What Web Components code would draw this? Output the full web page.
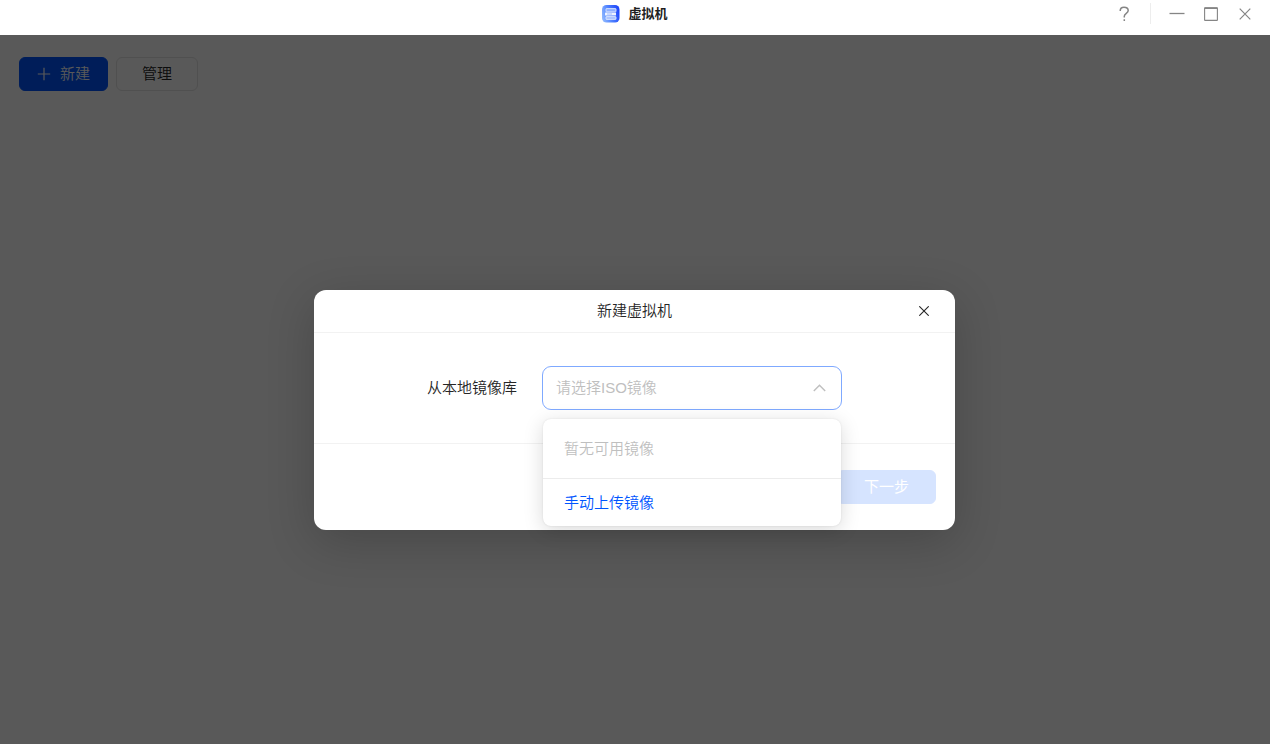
<!DOCTYPE html>
<html lang="zh-CN">
<head>
<meta charset="utf-8">
<title>虚拟机</title>
<style>
  html, body { height: 100%; margin: 0; }
  body {
    font-family: "Liberation Sans", "Noto Sans CJK SC", sans-serif;
    font-size: 15px;
    font-weight: 350;
    line-height: 22px;
    color: #262626;
    background: #fff;
  }
</style>
</head>
<body>
<vm-window>
  <vm-titlebar slot="title">虚拟机</vm-titlebar>
  <vm-toolbar slot="content"></vm-toolbar>
  <vm-dialog slot="overlay">
    <span slot="title">新建虚拟机</span>
    <vm-image-select></vm-image-select>
    <vm-button slot="actions" variant="primary" disabled>下一步</vm-button>
  </vm-dialog>
</vm-window>

<script>
  const define = (name, html, setup) => {
    const template = document.createElement('template');
    template.innerHTML = html;
    customElements.define(name, class extends HTMLElement {
      constructor() {
        super();
        this.attachShadow({ mode: 'open' }).append(template.content.cloneNode(true));
      }
      connectedCallback() {
        if (setup) setup(this, this.shadowRoot);
      }
    });
  };

  define('vm-button', `
    <style>
      :host { display: inline-flex; }
      button {
        display: flex; align-items: center; justify-content: center; gap: 9px;
        height: 34px; padding: 0 25px; box-sizing: border-box;
        border: 1px solid #e4e4e4; border-radius: 6px;
        background: #fff; color: #262626; font: inherit; cursor: pointer;
      }
      :host([variant="primary"]) button { border-color: #0055ff; background: #0055ff; color: #fff; }
      :host([icon]) button { padding: 0 17px; }
      :host([disabled]) button {
        padding: 0 26px; border-color: #d6e4ff; background: #d6e4ff; color: #fff;
        font-weight: 400; cursor: default;
      }
    </style>
    <button type="button"><slot name="icon"></slot><slot></slot></button>
  `, (host, root) => {
    root.querySelector('button').disabled = host.hasAttribute('disabled');
  });

  define('vm-titlebar', `
    <style>
      :host {
        display: grid; grid-template-columns: 1fr auto 1fr; align-items: center;
        height: 27px; padding-bottom: 8px; background: #fff;
      }
      h1 {
        grid-column: 2; display: flex; align-items: center; gap: 8px;
        margin: 0; font-size: 13px; line-height: 18px; font-weight: 700; color: #1f1f1f;
      }
      nav { display: flex; align-items: center; justify-content: flex-end; padding-right: 8px; }
      button {
        display: grid; place-items: center; width: 34px; height: 27px; padding: 0;
        border: 0; background: none; color: #858585; cursor: pointer;
      }
      .rule { width: 1px; height: 21px; margin: 0 9px; background: #ededed; }
      svg { display: block; fill: none; stroke: currentColor; }
    </style>
    <h1>
      <svg width="18" height="18" viewBox="0 0 18 18" stroke="none" aria-hidden="true">
        <defs><linearGradient id="g" x1="0" y1="0.6" x2="1" y2="0.3">
          <stop offset="0" stop-color="#8bb5ff"/><stop offset="0.45" stop-color="#4d80ff"/><stop offset="1" stop-color="#1c43fa"/>
        </linearGradient></defs>
        <rect width="17.5" height="17.5" rx="4.5" fill="url(#g)" stroke="none"/>
        <rect x="4" y="3.6" width="10" height="3.2" rx=".5" fill="#8fb0ff" stroke="#e8f0ff" stroke-width=".8"/>
        <rect x="3" y="7.4" width="11" height="3.2" rx=".5" fill="#eef4ff" stroke="none"/>
        <path d="M5 9h5" stroke="#8fb0ff" stroke-width=".8"/>
        <rect x="4" y="11.6" width="10" height="2.8" rx=".5" fill="#a9c3ff" stroke="#e8f0ff" stroke-width=".8"/>
      </svg>
      <slot></slot>
    </h1>
    <nav aria-label="窗口">
      <button type="button" aria-label="帮助">
        <svg width="12" height="16" viewBox="0 0 12 16" stroke-width="1.5">
          <path d="M2.2 4.9C2.2 2.5 3.7 1.2 6 1.2S10.2 2.6 10.2 4.6C10.2 7.3 6.3 7.3 6.3 10.2V11.4M6.3 13.2V15"/>
        </svg>
      </button>
      <span class="rule"></span>
      <button type="button" aria-label="最小化">
        <svg width="16" height="16" viewBox="0 0 16 16" stroke-width="1.3"><path d="M.5 7.5H15.5"/></svg>
      </button>
      <button type="button" aria-label="最大化">
        <svg width="14" height="14" viewBox="0 0 14 14"><rect x=".6" y=".8" width="12.8" height="12.6" rx=".5" stroke-width="1.1"/><path d="M.6 1.2H13.4" stroke-width="1.6"/></svg>
      </button>
      <button type="button" aria-label="关闭">
        <svg width="12" height="12" viewBox="0 0 12 12" stroke-width="1.2"><path d="M.7 .7L11.3 11.3M11.3 .7L.7 11.3"/></svg>
      </button>
    </nav>
  `);

  define('vm-toolbar', `
    <style>
      :host { display: flex; gap: 8px; padding: 22px 19px; }
      svg { display: block; }
    </style>
    <vm-button variant="primary" icon>
      <svg slot="icon" width="14" height="14" viewBox="0 0 14 14" fill="none" stroke="#fff" stroke-width="1.2" aria-hidden="true"><path d="M7 .8V13.2M.8 7H13.2"/></svg>新建
    </vm-button>
    <vm-button>管理</vm-button>
  `);

  define('vm-window', `
    <style>
      :host { display: flex; flex-direction: column; min-height: 100vh; }
      main { flex: 1; display: grid; }
      .content, .scrim { grid-area: 1 / 1; }
      .scrim {
        z-index: 1; display: flex; align-items: center; justify-content: center;
        padding: 41px 1px 0 0; background: rgba(0, 0, 0, .65);
      }
    </style>
    <slot name="title"></slot>
    <main>
      <div class="content"><slot name="content"></slot></div>
      <div class="scrim"><slot name="overlay"></slot></div>
    </main>
  `);

  define('vm-dialog', `
    <style>
      :host { display: block; width: 641px; max-width: 100%; }
      section { border-radius: 12px; background: #fff; box-shadow: 0 12px 48px rgba(0, 0, 0, .2); }
      header {
        display: grid; grid-template-columns: 1fr auto 1fr; align-items: center;
        height: 42px; padding: 0 19px; border-bottom: 1px solid #f2f2f2;
      }
      h2 { grid-column: 2; margin: 0; font: inherit; }
      header button {
        justify-self: end; display: grid; place-items: center; width: 24px; height: 24px;
        padding: 0; border: 0; background: none; color: #262626; cursor: pointer;
      }
      .body { display: flex; justify-content: center; padding: 33px 19px; }
      footer { display: flex; justify-content: flex-end; padding: 26px 19px; border-top: 1px solid #f2f2f2; }
    </style>
    <section role="dialog" aria-labelledby="t">
      <header>
        <h2 id="t"><slot name="title"></slot></h2>
        <button type="button" aria-label="关闭">
          <svg width="10" height="10" viewBox="0 0 10 10" fill="none" stroke="currentColor" stroke-width="1.1"><path d="M.3 .3L9.7 9.7M9.7 .3L.3 9.7"/></svg>
        </button>
      </header>
      <div class="body"><slot></slot></div>
      <footer><slot name="actions"></slot></footer>
    </section>
  `);

  define('vm-image-select', `
    <style>
      :host { display: flex; align-items: center; gap: 25px; }
      .field { position: relative; display: grid; align-items: center; width: 300px; }
      select, .field > svg { grid-area: 1 / 1; }
      select {
        appearance: none; width: 100%; height: 44px; padding: 0 40px 0 13px; box-sizing: border-box;
        border: 1px solid #7fa9ff; border-radius: 9px; background: #fff; color: #bfbfbf;
        font: inherit; outline: none;
      }
      .field > svg { justify-self: end; margin-right: 16px; pointer-events: none; }
      .menu {
        position: absolute; z-index: 2; top: calc(100% + 9px); left: 1px; right: 1px;
        border-radius: 8px; background: #fff;
        box-shadow: 0 0 2px rgba(0, 0, 0, .1), 0 4px 20px rgba(0, 0, 0, .15);
      }
      .menu p { margin: 0; padding: 19px 21px 18px; color: #bfbfbf; }
      .menu button {
        display: block; width: 100%; height: 48px; padding: 0 21px; border: 0;
        border-top: 1px solid #ececec; background: none; color: #0055ff; font: inherit;
        text-align: left; cursor: pointer;
      }
    </style>
    <label for="iso">从本地镜像库</label>
    <div class="field">
      <select id="iso"><option value="">请选择ISO镜像</option></select>
      <svg width="13" height="8" viewBox="0 0 13 8" fill="none" stroke="#bfbfbf" stroke-width="1.4" aria-hidden="true"><path d="M.8 7L6.5 1.2L12.2 7"/></svg>
      <div class="menu">
        <p>暂无可用镜像</p>
        <button type="button">手动上传镜像</button>
      </div>
    </div>
  `);
</script>
</body>
</html>
